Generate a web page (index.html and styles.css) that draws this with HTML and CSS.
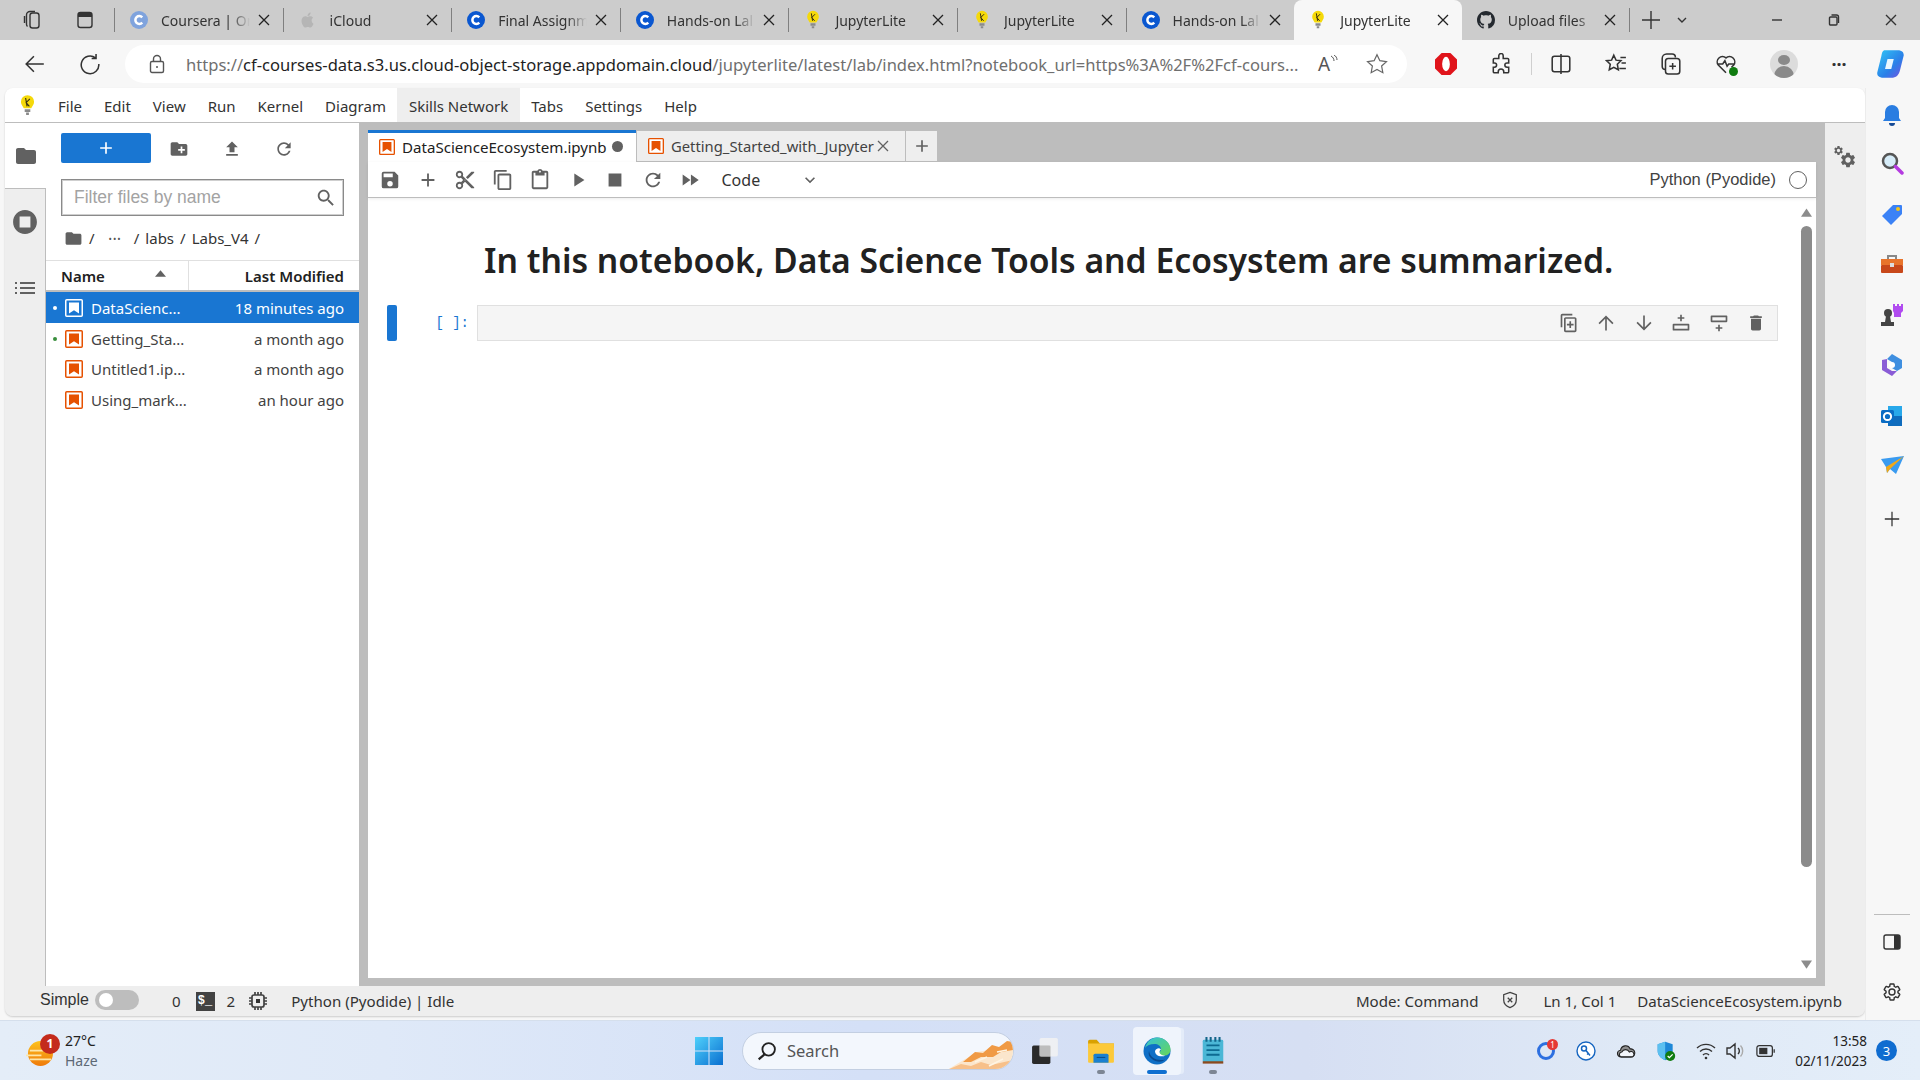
FILE: index.html
```html
<!DOCTYPE html>
<html lang="en">
<head>
<meta charset="utf-8">
<title>JupyterLite</title>
<link rel="stylesheet" href="styles.css">
</head>
<body>
<svg class="sprite" xmlns="http://www.w3.org/2000/svg">
  <symbol id="coursera" viewBox="0 0 20 20"><circle cx="10" cy="10" r="10" fill="currentColor"/><path d="M13.6 7a4.4 4.4 0 1 0 0 6" fill="none" stroke="#fff" stroke-width="2.8"/></symbol>
  <symbol id="bulb" viewBox="0 0 16 24"><path d="M8 1a7 7 0 0 1 7 7c0 3-2 4.600-3 7H4c-1-2.400-3-4-3-7a7 7 0 0 1 7-7z" fill="#f5d90a"/><path d="M5 16h6v3H5zM6.500 19.500h3V22h-3z" fill="#8a8a8a"/><path d="M6 4l1.500 9M10.500 5L6.500 9l3.500 4" fill="none" stroke="#3a3010" stroke-width="1.200"/></symbol>
  <symbol id="github" viewBox="0 0 16 16"><path fill="#24292f" d="M8 0C3.580 0 0 3.580 0 8c0 3.540 2.290 6.530 5.470 7.590.4.070.55-.17.55-.38 0-.19-.01-.82-.01-1.490-2.010.37-2.530-.49-2.690-.94-.09-.23-.48-.94-.82-1.130-.28-.15-.68-.52-.01-.53.63-.01 1.080.58 1.230.82.72 1.210 1.870.87 2.330.66.070-.52.28-.87.51-1.070-1.780-.2-3.640-.89-3.640-3.950 0-.87.31-1.590.82-2.150-.08-.2-.36-1.020.08-2.120 0 0 .67-.21 2.200.82.64-.18 1.320-.27 2-.27s1.360.09 2 .27c1.530-1.040 2.200-.82 2.200-.82.44 1.100.16 1.920.08 2.120.51.56.82 1.270.82 2.150 0 3.070-1.870 3.750-3.650 3.950.29.25.54.73.54 1.480 0 1.070-.01 1.930-.01 2.200 0 .21.15.46.55.38A8.010 8.010 0 0 0 16 8c0-4.420-3.580-8-8-8z"/></symbol>
  <symbol id="x" viewBox="0 0 12 12"><path d="M1 1l10 10M11 1L1 11" fill="none" stroke="currentColor" stroke-width="1.300"/></symbol>
  <symbol id="m-add" viewBox="0 0 24 24"><path d="M19 13h-6v6h-2v-6H5v-2h6V5h2v6h6v2z"/></symbol>
  <symbol id="m-save" viewBox="0 0 24 24"><path d="M17 3H5a2 2 0 0 0-2 2v14a2 2 0 0 0 2 2h14a2 2 0 0 0 2-2V7l-4-4zm-5 16a3 3 0 1 1 0-6 3 3 0 0 1 0 6zm3-10H5V5h10v4z"/></symbol>
  <symbol id="m-cut" viewBox="0 0 24 24"><path d="M9.640 7.640c.23-.5.36-1.050.36-1.640 0-2.210-1.790-4-4-4S2 3.790 2 6s1.790 4 4 4c.59 0 1.140-.13 1.640-.36L10 12l-2.360 2.360C7.140 14.130 6.590 14 6 14c-2.210 0-4 1.790-4 4s1.790 4 4 4 4-1.790 4-4c0-.59-.13-1.140-.36-1.640L12 14l7 7h3v-1L9.640 7.640zM6 8c-1.100 0-2-.89-2-2s.9-2 2-2 2 .89 2 2-.9 2-2 2zm0 12c-1.100 0-2-.89-2-2s.9-2 2-2 2 .89 2 2-.9 2-2 2zm6-7.500c-.28 0-.5-.22-.5-.5s.22-.5.5-.5.5.22.5.5-.22.5-.5.5zM19 3l-6 6 2 2 7-7V3z"/></symbol>
  <symbol id="m-copy" viewBox="0 0 24 24"><path d="M16 1H4c-1.100 0-2 .9-2 2v14h2V3h12V1zm3 4H8c-1.100 0-2 .9-2 2v14c0 1.100.9 2 2 2h11c1.100 0 2-.9 2-2V7c0-1.100-.9-2-2-2zm0 16H8V7h11v14z"/></symbol>
  <symbol id="m-paste" viewBox="0 0 24 24"><path d="M19 2h-4.180C14.400.84 13.300 0 12 0c-1.300 0-2.400.84-2.820 2H5c-1.100 0-2 .9-2 2v16c0 1.100.9 2 2 2h14c1.100 0 2-.9 2-2V4c0-1.100-.9-2-2-2zm-7 0c.55 0 1 .45 1 1s-.45 1-1 1-1-.45-1-1 .45-1 1-1zm7 18H5V4h2v3h10V4h2v16z"/></symbol>
  <symbol id="m-run" viewBox="0 0 24 24"><path d="M8 5v14l11-7z"/></symbol>
  <symbol id="m-stop" viewBox="0 0 24 24"><path d="M5 5h14v14H5z"/></symbol>
  <symbol id="m-refresh" viewBox="0 0 24 24"><path d="M17.650 6.350C16.200 4.900 14.210 4 12 4c-4.420 0-7.990 3.580-7.990 8s3.570 8 7.990 8c3.730 0 6.840-2.550 7.730-6h-2.080c-.82 2.330-3.040 4-5.650 4-3.310 0-6-2.690-6-6s2.690-6 6-6c1.660 0 3.140.69 4.220 1.780L13 11h7V4l-2.350 2.350z"/></symbol>
  <symbol id="m-ff" viewBox="0 0 24 24"><path d="M4 18l8.500-6L4 6v12zm9-12v12l8.500-6L13 6z"/></symbol>
  <symbol id="m-chev" viewBox="0 0 24 24"><path d="M16.590 8.590L12 13.170 7.410 8.590 6 10l6 6 6-6z"/></symbol>
  <symbol id="m-upload" viewBox="0 0 24 24"><path d="M9 16h6v-6h4l-7-7-7 7h4zm-4 2h14v2H5z"/></symbol>
  <symbol id="m-folder" viewBox="0 0 24 24"><path d="M10 4H4c-1.100 0-2 .9-2 2v12c0 1.100.9 2 2 2h16c1.100 0 2-.9 2-2V8c0-1.100-.9-2-2-2h-8l-2-2z"/></symbol>
  <symbol id="m-newfolder" viewBox="0 0 24 24"><path d="M20 6h-8l-2-2H4c-1.110 0-1.990.89-1.990 2L2 18c0 1.110.89 2 2 2h16c1.110 0 2-.89 2-2V8c0-1.110-.89-2-2-2zm-1 8h-3v3h-2v-3h-3v-2h3V9h2v3h3v2z"/></symbol>
  <symbol id="m-search" viewBox="0 0 24 24"><path d="M15.500 14h-.79l-.28-.27C15.410 12.590 16 11.110 16 9.500 16 5.910 13.090 3 9.500 3S3 5.910 3 9.500 5.910 16 9.500 16c1.610 0 3.090-.59 4.230-1.570l.27.28v.79l5 4.990L20.490 19l-4.990-5zm-6 0C7.010 14 5 11.990 5 9.500S7.010 5 9.500 5 14 7.010 14 9.500 11.990 14 9.500 14z"/></symbol>
  <symbol id="m-stopc" viewBox="0 0 24 24"><path d="M12 1C5.900 1 1 5.900 1 12s4.900 11 11 11 11-4.900 11-11S18.100 1 12 1zm5 16H7V7h10v10z"/></symbol>
  <symbol id="m-list" viewBox="0 0 24 24"><path d="M2 13h2v-2H2v2zm0 5h2v-2H2v2zM2 8h2V6H2v2zm5 5h15v-2H7v2zm0 5h15v-2H7v2zM7 6v2h15V6H7z"/></symbol>
  <symbol id="m-up" viewBox="0 0 24 24"><path d="M3 12l1.410 1.410L11 6.830V21h2V6.830l6.580 6.590L21 12l-9-9-9 9z"/></symbol>
  <symbol id="m-down" viewBox="0 0 24 24"><path d="M21 12l-1.410-1.410L13 17.170V3h-2v14.170l-6.580-6.590L3 12l9 9 9-9z"/></symbol>
  <symbol id="m-del" viewBox="0 0 24 24"><path d="M6 19c0 1.100.9 2 2 2h8c1.100 0 2-.9 2-2V7H6v12zM19 4h-3.500l-1-1h-5l-1 1H5v2h14V4z"/></symbol>
  <symbol id="m-dup" viewBox="0 0 24 24"><path d="M16 1H4c-1.100 0-2 .9-2 2v14h2V3h12V1zm3 4H8c-1.100 0-2 .9-2 2v14c0 1.100.9 2 2 2h11c1.100 0 2-.9 2-2V7c0-1.100-.9-2-2-2zm0 16H8V7h11v14zM12.500 13V10h2v3h3v2h-3v3h-2v-3h-3v-2z"/></symbol>
  <symbol id="m-above" viewBox="0 0 24 24"><path d="M11 2h2v3h3v2h-3v3h-2V7H8V5h3zM3 13h18a1 1 0 0 1 1 1v6a1 1 0 0 1-1 1H3a1 1 0 0 1-1-1v-6a1 1 0 0 1 1-1zm1 2v4h16v-4z"/></symbol>
  <symbol id="m-below" viewBox="0 0 24 24"><path d="M11 22h2v-3h3v-2h-3v-3h-2v3H8v2h3zM3 3h18a1 1 0 0 1 1 1v6a1 1 0 0 1-1 1H3a1 1 0 0 1-1-1V4a1 1 0 0 1 1-1zm1 2v4h16V5z"/></symbol>
  <symbol id="m-gear" viewBox="0 0 24 24"><path d="M19.140 12.940c.04-.3.06-.61.06-.94 0-.32-.02-.64-.07-.94l2.030-1.580a.49.49 0 0 0 .12-.61l-1.920-3.320a.488.488 0 0 0-.59-.22l-2.390.96c-.5-.38-1.030-.7-1.620-.94l-.36-2.540a.484.484 0 0 0-.48-.41h-3.840c-.24 0-.43.17-.47.41l-.36 2.540c-.59.24-1.130.57-1.620.94l-2.390-.96c-.22-.08-.47 0-.59.22L2.740 8.870c-.12.21-.08.47.12.61l2.030 1.580c-.05.3-.09.63-.09.94s.02.64.07.94l-2.030 1.580a.49.49 0 0 0-.12.61l1.920 3.320c.12.22.37.29.59.22l2.390-.96c.5.38 1.030.7 1.620.94l.36 2.540c.05.24.24.41.48.41h3.840c.24 0 .44-.17.47-.41l.36-2.540c.59-.24 1.130-.56 1.620-.94l2.390.96c.22.08.47 0 .59-.22l1.920-3.320c.12-.22.07-.47-.12-.61l-2.010-1.580zM12 15.600c-1.980 0-3.600-1.620-3.600-3.600s1.620-3.600 3.600-3.600 3.600 1.620 3.600 3.600-1.620 3.600-3.600 3.600z"/></symbol>
  <symbol id="nb" viewBox="0 0 18 18"><rect x=".75" y=".75" width="16.500" height="16.500" rx="1" fill="var(--nb-bg,#fff)" stroke="currentColor" stroke-width="1.500"/><path d="M4 3.500h10v11l-5-3.200-5 3.200z" fill="currentColor"/></symbol>
</svg>

<header class="tabstrip">
  <span class="strip-btn strip-first"><svg class="i20 line" viewBox="0 0 20 20"><rect x="8" y="3" width="9" height="15" rx="2.500"/><path d="M5.500 16.500a3 3 0 0 1-1-2.200V5a3.500 3.500 0 0 1 3.500-3.500h5M2.500 13V6"/></svg></span>
  <span class="strip-btn"><svg class="i20 line" viewBox="0 0 20 20"><rect x="3" y="2.500" width="14" height="15" rx="2.500"/><path class="solid" d="M3 5a2.500 2.500 0 0 1 2.500-2.500h9A2.500 2.500 0 0 1 17 5v2H3z"/></svg></span>
  <span class="sep sep-first"></span>
  <div class="tab"><svg class="fav dim"><use href="#coursera"/></svg><span class="tab-title">Coursera | On</span><svg class="tab-x"><use href="#x"/></svg></div>
  <span class="sep"></span>
  <div class="tab"><svg class="fav" viewBox="0 0 20 20"><path fill="#b5b5b5" d="M14 10.500c0-2 1.600-3 1.700-3-1-1.400-2.400-1.600-3-1.600-1.300-.1-2.500.8-3.100.8s-1.600-.8-2.700-.8C5.500 6 4.200 6.800 3.500 8c-1.500 2.500-.4 6.300 1 8.300.7 1 1.500 2.100 2.600 2.100 1 0 1.400-.7 2.700-.7s1.600.7 2.700.7 1.800-1 2.500-2c.8-1.100 1.100-2.200 1.100-2.300-.1 0-2.100-.8-2.100-3.600zM12 4.400c.6-.7 1-1.700.9-2.700-.8 0-1.900.6-2.500 1.300-.5.6-1 1.600-.9 2.600.9.100 1.900-.5 2.500-1.200z"/></svg><span class="tab-title">iCloud</span><svg class="tab-x"><use href="#x"/></svg></div>
  <span class="sep"></span>
  <div class="tab"><svg class="fav blue"><use href="#coursera"/></svg><span class="tab-title">Final Assignm</span><svg class="tab-x"><use href="#x"/></svg></div>
  <span class="sep"></span>
  <div class="tab"><svg class="fav blue"><use href="#coursera"/></svg><span class="tab-title">Hands-on Lal</span><svg class="tab-x"><use href="#x"/></svg></div>
  <span class="sep"></span>
  <div class="tab"><svg class="fav"><use href="#bulb"/></svg><span class="tab-title">JupyterLite</span><svg class="tab-x"><use href="#x"/></svg></div>
  <span class="sep"></span>
  <div class="tab"><svg class="fav"><use href="#bulb"/></svg><span class="tab-title">JupyterLite</span><svg class="tab-x"><use href="#x"/></svg></div>
  <span class="sep"></span>
  <div class="tab"><svg class="fav blue"><use href="#coursera"/></svg><span class="tab-title">Hands-on Lal</span><svg class="tab-x"><use href="#x"/></svg></div>
  <div class="tab tab-active"><svg class="fav"><use href="#bulb"/></svg><span class="tab-title">JupyterLite</span><svg class="tab-x"><use href="#x"/></svg></div>
  <div class="tab"><svg class="fav"><use href="#github"/></svg><span class="tab-title">Upload files</span><svg class="tab-x"><use href="#x"/></svg></div>
  <span class="sep"></span>
  <svg class="strip-plus line" viewBox="0 0 20 20"><path d="M10 1v18M1 10h18"/></svg>
  <svg class="strip-chev line" viewBox="0 0 10 10"><path d="M1 3l4 4 4-4"/></svg>
  <div class="winctl">
    <svg class="line win" viewBox="0 0 12 12"><path d="M1 6h10"/></svg>
    <svg class="line win" viewBox="0 0 12 12"><rect x="1.500" y="3" width="7.500" height="8" rx="1"/><path d="M3.500 1h5a2 2 0 0 1 2 2v6"/></svg>
    <svg class="line win" viewBox="0 0 12 12"><path d="M1 1l10 10M11 1L1 11"/></svg>
  </div>
</header>

<nav class="addrrow">
  <svg class="nav-back line" viewBox="0 0 20 20"><path d="M18 10H2M9 3l-7 7 7 7"/></svg>
  <svg class="nav-reload line" viewBox="0 0 20 20"><path d="M15 4.500A8 8 0 1 0 18 10M15.500 1v4h-4"/></svg>
  <div class="addrbar">
    <svg class="lock line" viewBox="0 0 16 20"><rect x="1.500" y="7.500" width="13" height="11" rx="1.500"/><path d="M4.500 7.500V5a3.500 3.500 0 0 1 7 0v2.500"/><circle class="solid" cx="8" cy="13" r="1"/></svg>
    <div class="url"><span class="url-dim">https://</span>cf-courses-data.s3.us.cloud-object-storage.appdomain.cloud<span class="url-dim">/jupyterlite/latest/lab/index.html?notebook_url=https%3A%2F%2Fcf-cours...</span></div>
    <span class="read-aloud">A<svg class="read-waves line" viewBox="0 0 8 10"><path d="M1 1c2 1 3 3 3 5M4 0c2 1 3 3 3 5"/></svg></span>
    <svg class="star line" viewBox="0 0 20 20"><path d="M10 1.500l2.600 5.500 6 .8-4.400 4.100 1.100 6-5.300-2.900-5.300 2.900 1.100-6L1.400 7.800l6-.8z"/></svg>
  </div>
  <div class="ext-icons">
    <svg class="ext ext-opera" viewBox="0 0 20 20"><path fill="#e0141b" d="M6 0h8l6 6v8l-6 6H6l-6-6V6z"/><ellipse cx="10" cy="10" rx="3.500" ry="6.500" fill="#fff"/></svg>
    <svg class="ext line" viewBox="0 0 20 20"><path d="M8 2.500a2 2 0 0 1 4 0V5h4a1 1 0 0 1 1 1v3h-1.500a2 2 0 0 0 0 4H17v4a1 1 0 0 1-1 1h-3.500v-1a2.500 2.500 0 0 0-5 0v1H4a1 1 0 0 1-1-1v-4h1a2 2 0 0 0 0-4H3V6a1 1 0 0 1 1-1h4z"/></svg>
    <span class="ext-sep"></span>
    <svg class="ext line" viewBox="0 0 20 20"><rect x="2" y="3" width="16" height="14" rx="2"/><path d="M10 1v18"/></svg>
    <svg class="ext line" viewBox="0 0 20 20"><path d="M8 2l2 4.500 4.500.5-3.300 3.200.9 5L8 13l-4.100 2.200.9-5L1.500 7 6 6.500zM14 4h5M15 9h4M13 14h6"/></svg>
    <svg class="ext line" viewBox="0 0 20 20"><rect x="5" y="5" width="13" height="14" rx="2.500"/><path d="M5 15a3 3 0 0 1-3-3V5a4 4 0 0 1 4-4h5a3 3 0 0 1 3 3M11.500 9v6M8.500 12h6"/></svg>
    <span class="ext-health"><svg class="ext line" viewBox="0 0 20 20"><path d="M10 18L3 11a4.800 4.800 0 0 1 7-6.500A4.800 4.800 0 0 1 17 11l-2 2M2 10h5l2-3 2 5 1.500-2H18"/></svg><span class="ok-badge"></span></span>
    <span class="avatar"><span class="avatar-head"></span><span class="avatar-body"></span></span>
    <span class="dots">···</span>
    <svg class="ext copilot" viewBox="0 0 24 24"><defs><linearGradient id="cg" x1="0" y1="0" x2="1" y2="1"><stop offset="0" stop-color="#2fc6f5"/><stop offset=".6" stop-color="#2b7fe8"/><stop offset="1" stop-color="#7a4fe0"/></linearGradient></defs><path fill="url(#cg)" d="M8 1h10c4 0 5 2 5 4l-3 12c-1 4-3 6-7 6H7c-4 0-6-2-5-5L5 6c.6-3 1-5 3-5z"/><path fill="#e9f7ff" d="M10 8h5l-2 8H8z"/></svg>
  </div>
</nav>

<div class="mainrow">
  <main class="app">
    <div class="menubar">
      <svg class="menu-logo"><use href="#bulb"/></svg>
      <span class="menu-item">File</span><span class="menu-item">Edit</span><span class="menu-item">View</span><span class="menu-item">Run</span><span class="menu-item">Kernel</span><span class="menu-item">Diagram</span><span class="menu-item menu-active">Skills Network</span><span class="menu-item">Tabs</span><span class="menu-item">Settings</span><span class="menu-item">Help</span>
    </div>

    <div class="workspace">
      <aside class="activity">
        <div class="act-tab act-on"><svg class="i24 g5"><use href="#m-folder"/></svg></div>
        <div class="act-tab"><svg class="i26 g5"><use href="#m-stopc"/></svg></div>
        <div class="act-tab"><svg class="i24 g5"><use href="#m-list"/></svg></div>
      </aside>

      <section class="files">
        <div class="files-tools">
          <button class="newbtn" type="button"><svg class="i20 white"><use href="#m-add"/></svg></button>
          <svg class="i20 g5 ft-icon"><use href="#m-newfolder"/></svg>
          <svg class="i20 g5 ft-icon"><use href="#m-upload"/></svg>
          <svg class="i20 g5 ft-icon"><use href="#m-refresh"/></svg>
        </div>
        <div class="filter"><span class="filter-ph">Filter files by name</span><svg class="i22 g5"><use href="#m-search"/></svg></div>
        <div class="crumbs"><svg class="crumb-folder g5"><use href="#m-folder"/></svg><span>/</span><span class="crumb-dots">•••</span><span>/</span><span>labs</span><span>/</span><span>Labs_V4</span><span>/</span></div>
        <div class="fhead">
          <div class="fh-name">Name<svg class="sort" viewBox="0 0 12 7"><path d="M6 0l6 7H0z"/></svg></div>
          <div class="fh-mod">Last Modified</div>
        </div>
        <div class="frow frow-sel"><span class="dot"></span><svg class="nbicon"><use href="#nb"/></svg><span class="fname">DataScienc...</span><span class="fdate">18 minutes ago</span></div>
        <div class="frow"><span class="dot dot-green"></span><svg class="nbicon"><use href="#nb"/></svg><span class="fname">Getting_Sta...</span><span class="fdate">a month ago</span></div>
        <div class="frow"><span class="dot dot-none"></span><svg class="nbicon"><use href="#nb"/></svg><span class="fname">Untitled1.ip...</span><span class="fdate">a month ago</span></div>
        <div class="frow"><span class="dot dot-none"></span><svg class="nbicon"><use href="#nb"/></svg><span class="fname">Using_mark...</span><span class="fdate">an hour ago</span></div>
      </section>

      <section class="dock">
        <div class="doc-tabs">
          <div class="dtab dtab-on"><svg class="nbicon"><use href="#nb"/></svg><span class="dtab-title">DataScienceEcosystem.ipynb</span><span class="dirty"></span></div>
          <div class="dtab dtab-second"><svg class="nbicon"><use href="#nb"/></svg><span class="dtab-title dtab-clip">Getting_Started_with_Jupyter</span><svg class="dtab-x"><use href="#x"/></svg></div>
          <div class="dtab dtab-add"><svg class="i20 g5"><use href="#m-add"/></svg></div>
        </div>
        <div class="nbpanel">
          <div class="nbtools">
            <svg class="i22 g5 nbt"><use href="#m-save"/></svg>
            <svg class="i22 g5 nbt"><use href="#m-add"/></svg>
            <svg class="i22 g5 nbt"><use href="#m-cut"/></svg>
            <svg class="i22 g5 nbt"><use href="#m-copy"/></svg>
            <svg class="i22 g5 nbt"><use href="#m-paste"/></svg>
            <svg class="i22 g5 nbt"><use href="#m-run"/></svg>
            <svg class="i22 g5 nbt"><use href="#m-stop"/></svg>
            <svg class="i22 g5 nbt"><use href="#m-refresh"/></svg>
            <svg class="i22 g5 nbt"><use href="#m-ff"/></svg>
            <span class="celltype">Code</span>
            <svg class="i20 g5 celltype-chev"><use href="#m-chev"/></svg>
            <span class="kernel">Python (Pyodide)</span>
            <span class="kernel-ring"></span>
          </div>
          <div class="nbbody">
            <div class="nbcontent">
              <h1 class="nbhead">In this notebook, Data Science Tools and Ecosystem are summarized.</h1>
              <div class="cell">
                <span class="collapser"></span>
                <span class="prompt">[ ]:</span>
                <div class="cellinput">
                  <svg class="i20 g5 cellbtn"><use href="#m-dup"/></svg>
                  <svg class="i20 g5 cellbtn"><use href="#m-up"/></svg>
                  <svg class="i20 g5 cellbtn"><use href="#m-down"/></svg>
                  <svg class="i20 g5 cellbtn"><use href="#m-above"/></svg>
                  <svg class="i20 g5 cellbtn"><use href="#m-below"/></svg>
                  <svg class="i20 g5 cellbtn"><use href="#m-del"/></svg>
                </div>
              </div>
            </div>
            <div class="scrollbar">
              <svg class="sb-arrow" viewBox="0 0 12 9"><path d="M6 0l6 9H0z"/></svg>
              <div class="sb-thumb"></div>
              <svg class="sb-arrow sb-down" viewBox="0 0 12 9"><path d="M0 0h12L6 9z"/></svg>
            </div>
          </div>
        </div>
      </section>

      <aside class="rightrail">
        <svg class="gears g5" viewBox="0 0 24 24"><use href="#m-gear" x="6" y="6" width="18" height="18"/><use href="#m-gear" x="0" y="0" width="11" height="11"/></svg>
      </aside>
    </div>

    <footer class="status">
      <span class="st-simple">Simple</span>
      <span class="toggle"><span class="knob"></span></span>
      <span class="st-zero">0</span>
      <span class="termicon">$_</span>
      <span class="st-two">2</span>
      <svg class="chip line" viewBox="0 0 20 20"><rect x="4" y="4" width="12" height="12" rx="2"/><rect class="solid" x="8" y="8" width="4" height="4"/><path d="M7 1v3M10 1v3M13 1v3M7 16v3M10 16v3M13 16v3M1 7h3M1 10h3M1 13h3M16 7h3M16 10h3M16 13h3"/></svg>
      <span class="st-kernel">Python (Pyodide) | Idle</span>
      <span class="st-mode">Mode: Command</span>
      <svg class="st-shield line" viewBox="0 0 20 20"><path d="M10 1.500l7 2.500v6c0 4-3 7-7 8.500C6 17 3 14 3 10V4zM7.500 7.500l5 5M12.500 7.500l-5 5"/></svg>
      <span class="st-ln">Ln 1, Col 1</span>
      <span class="st-file">DataScienceEcosystem.ipynb</span>
    </footer>
  </main>

  <aside class="edgebar">
    <svg class="eb eb-first" viewBox="0 0 24 24"><path fill="#2a7de1" d="M12 2a7 7 0 0 1 7 7v6l2 3H3l2-3V9a7 7 0 0 1 7-7z"/><path fill="#154a96" d="M9 20h6a3 3 0 0 1-6 0z"/></svg>
    <svg class="eb" viewBox="0 0 24 24"><circle cx="10" cy="10" r="7" fill="#d6ecf8" stroke="#555" stroke-width="2.500"/><path d="M15.500 15.500L22 22" stroke="#b43be0" stroke-width="3.500" stroke-linecap="round"/></svg>
    <svg class="eb" viewBox="0 0 24 24"><path fill="#3b82f6" d="M13 3h8a1 1 0 0 1 1 1v8L11 23 2 14z"/><circle cx="18" cy="7" r="2" fill="#f5c518"/></svg>
    <svg class="eb" viewBox="0 0 24 24"><path fill="none" stroke="#888" stroke-width="2" d="M8 7V4h8v3"/><rect x="1" y="7" width="22" height="6" fill="#e8742b"/><rect x="1" y="13" width="22" height="8" rx="1" fill="#c8481a"/><rect x="10" y="11" width="4" height="4" fill="#ddd"/></svg>
    <svg class="eb" viewBox="0 0 24 24"><path fill="#b14cf0" d="M13 1h2v2h2V1h2v2h2V1h2v7l-2 2v4h-7v-4l-1-2z"/><circle cx="8" cy="10" r="4" fill="#444"/><path fill="#444" d="M6 13h4l1 6h3v4H1v-4h4z"/></svg>
    <svg class="eb" viewBox="0 0 24 24"><path fill="#3f8fe0" d="M12 1l10 6v8l-5 3-5-3V9L7 6z"/><path fill="#8a5cd6" d="M2 7l5-1v9l5 3 5 0-5 5-10-6z"/><circle cx="12" cy="12" r="3" fill="#fff"/></svg>
    <svg class="eb" viewBox="0 0 24 24"><path fill="#28a8ea" d="M8 2h14v20H8z"/><path fill="#0f6cbd" d="M8 12l14 0v10H8z"/><rect x="1" y="6" width="13" height="13" rx="1.500" fill="#0a6cc4"/><circle cx="7.500" cy="12.500" r="3.600" fill="none" stroke="#fff" stroke-width="2"/></svg>
    <svg class="eb" viewBox="0 0 24 24"><path fill="#3a9bf0" d="M1 5l23-3-8 18-6-5-3 4-1-6z"/><path fill="#f0a818" d="M6 13l18-11-14 13-3 4z"/></svg>
    <svg class="eb eb-plus line" viewBox="0 0 20 20"><path d="M10 2v16M2 10h16"/></svg>
    <div class="eb-foot">
      <span class="eb-rule"></span>
      <svg class="eb-small line" viewBox="0 0 20 20"><rect x="2" y="3" width="16" height="14" rx="2"/><path class="solid" d="M12 3h4a2 2 0 0 1 2 2v10a2 2 0 0 1-2 2h-4z"/></svg>
      <svg class="eb-small eb-gear" viewBox="0 0 24 24"><use href="#m-gear" class="gear-stroke"/></svg>
    </div>
  </aside>
</div>

<footer class="taskbar">
  <div class="tb-left">
    <span class="weather"><svg class="sun" viewBox="0 0 28 28"><defs><linearGradient id="sg" x1="0" y1="0" x2="0" y2="1"><stop offset="0" stop-color="#fdc21e"/><stop offset="1" stop-color="#ef7a0a"/></linearGradient></defs><circle cx="15" cy="14" r="13" fill="url(#sg)"/><path d="M0 16h16M4 11h14M4 20h22" stroke="#fde6a8" stroke-width="1.800"/></svg><span class="wbadge">1</span></span>
    <div class="wtext"><span class="wtemp">27°C</span><span class="wdesc">Haze</span></div>
  </div>
  <div class="tb-center">
    <svg class="winlogo" viewBox="0 0 30 30"><defs><linearGradient id="wg" x1="0" y1="0" x2="1" y2="1"><stop offset="0" stop-color="#4fd0fb"/><stop offset="1" stop-color="#0a6fd0"/></linearGradient></defs><path fill="url(#wg)" d="M1 1h13.500v13.500H1zM15.500 1H29v13.500H15.500zM1 15.500h13.500V29H1zM15.500 15.500H29V29H15.500z"/></svg>
    <div class="tsearch">
      <svg class="ts-icon" viewBox="0 0 24 24"><circle cx="14" cy="10" r="7.500" fill="none" stroke="#222" stroke-width="2.200"/><path d="M9 16l-7 6" stroke="#222" stroke-width="2.600"/></svg>
      <span class="ts-text">Search</span>
      <svg class="ts-art" viewBox="0 0 70 38"><path fill="#fbe6cc" d="M4 38L34 20l36-6v24z"/><path fill="#f09a45" d="M20 30l12-10 8 1 9-8 7 2 8-6 6 1v8l-12 2-8 5-12 0-10 5z"/><path fill="#f7c08a" d="M4 38l14-6 10 2 10-4 10 3 22-5v10z"/><path d="M32 30l12-5M46 34l14-7M54 20l10-2" stroke="#fff4e2" stroke-width="1.500" fill="none"/></svg>
    </div>
    <span class="tb-app"><svg class="tb-ic" viewBox="0 0 26 26"><rect x="1" y="8" width="17" height="17" rx="1.500" fill="#2a2a2a"/><rect x="8" y="1" width="17" height="17" rx="1.500" fill="#f2f2f2" fill-opacity=".85"/><rect x="8" y="8" width="10" height="10" fill="#bdbdbd"/></svg></span>
    <span class="tb-app"><svg class="tb-ic" viewBox="0 0 26 26"><path fill="#d9a100" d="M1 4a1.500 1.500 0 0 1 1.500-1.500H9L12 6h13v4H1z"/><path fill="#fcc93a" d="M1 6h24v17a1 1 0 0 1-1 1H2a1 1 0 0 1-1-1z"/><path fill="#1a80d0" d="M6 17a1.500 1.500 0 0 1 1.500-1.500h11A1.500 1.500 0 0 1 20 17v7H6z"/><path d="M9 19h8" stroke="#0b4f8c" stroke-width="1"/></svg><span class="run-dot"></span></span>
    <span class="tb-app tb-app-on"><svg class="tb-ic" viewBox="0 0 28 28"><defs><linearGradient id="eg" x1="0" y1="0" x2="1" y2="1"><stop offset="0" stop-color="#35c1d8"/><stop offset="1" stop-color="#66d65a"/></linearGradient></defs><circle cx="14" cy="14" r="13.500" fill="#0f6fc6"/><path fill="url(#eg)" d="M2 11C4 4 9 .5 14 .5c8 0 13.500 6 13.500 12 0 4-3 6-6.500 6-3 0-5-1-5-2.500 0-1 2-1 2-4C18 9 15 7 11.500 7 7 7 4 8.500 2 11z"/><path fill="#0a4a8f" d="M9 22c-3-2-4-5-3-8 1 6 6 9 12 9 2 0 3 0 4-.5C18 26 13 25 9 22z"/><path fill="#fff" d="M12 14a3.500 3.500 0 0 1 6-1.500c-1 .3-1.500 1.500-1.500 2.500 0 2 2.500 3.500 5.500 3.500l-1 .7C15 20 12 17.500 12 14z"/></svg><span class="run-bar"></span></span>
    <span class="tb-app"><svg class="tb-ic" viewBox="0 0 26 30"><rect x="2" y="3" width="22" height="24" rx="1.500" fill="#4bb7d6"/><rect x="2" y="26" width="22" height="2.500" fill="#8b4a1e"/><path d="M6 9h14M6 14h14M6 19h14" stroke="#0d6a91" stroke-width="2"/><path d="M6 0v5M10.500 0v5M15.500 0v5M20 0v5" stroke="#13658a" stroke-width="2.200"/></svg><span class="run-dot"></span></span>
  </div>
  <div class="tb-right">
    <span class="tray"><span class="tray-ring"><span class="tray-note">1</span></span></span>
    <span class="tray"><svg class="tray-ic" viewBox="0 0 20 20"><circle cx="10" cy="10" r="9" fill="#fff" stroke="#1565c0" stroke-width="1.400"/><circle cx="8" cy="7.500" r="2.500" fill="none" stroke="#1565c0" stroke-width="1.500"/><path d="M10 9.500l4 5M12.500 12.500l-1.500 1" stroke="#1565c0" stroke-width="1.500"/></svg></span>
    <span class="tray"><svg class="tray-ic" viewBox="0 0 24 20"><path fill="#8d8d8d" stroke="#222" stroke-width="1.300" d="M6 17a4 4 0 0 1-.5-8A6 6 0 0 1 17 7.500 4.700 4.700 0 0 1 18.500 17z"/><path fill="#f2f5fa" stroke="#222" stroke-width="1.300" d="M6 17a3 3 0 0 1 1-5.800 5 5 0 0 1 9 0A3 3 0 0 1 20 17z"/></svg></span>
    <span class="tray tray-last"><svg class="tray-ic" viewBox="0 0 22 24"><path fill="#1e88d8" d="M10 1l9 3v8c0 5-4 9-9 11-5-2-9-6-9-11V4z"/><path fill="#5cc0f0" d="M10 1v22C5 21 1 17 1 12V4z"/><circle cx="16" cy="18" r="6" fill="#107c10"/><path d="M13 18l2 2 4-4" fill="none" stroke="#fff" stroke-width="1.500"/></svg></span>
    <span class="tray tray-sm"><svg class="tray-ic line" viewBox="0 0 20 20"><path d="M1 7a13 13 0 0 1 18 0M4 10.500a8.500 8.500 0 0 1 12 0M7 14a4 4 0 0 1 6 0"/><circle class="solid" cx="10" cy="17" r="1.300"/></svg></span>
    <span class="tray tray-sm"><svg class="tray-ic line" viewBox="0 0 20 20"><path d="M2 7h3l5-4v14l-5-4H2zM13 7a4 4 0 0 1 0 6"/><path class="faint" d="M15.500 4.500a8 8 0 0 1 0 11"/></svg></span>
    <span class="tray tray-sm tray-batt"><svg class="tray-ic line" viewBox="0 0 22 14"><rect x="1" y="1" width="17" height="12" rx="2.500"/><rect class="solid" x="3.500" y="3.500" width="9" height="7"/><path d="M20 5v4"/></svg></span>
    <div class="clock"><span>13:58</span><span>02/11/2023</span></div>
    <span class="notif">3</span>
  </div>
</footer>
</body>
</html>
```

FILE: styles.css
```css
* { box-sizing: border-box; }
html, body { margin: 0; height: 100%; }
body {
  width: 1920px; height: 1080px; overflow: hidden;
  display: flex; flex-direction: column;
  background: #f7f7f7; color: #212121;
  font-family: "Noto Sans", "Liberation Sans", sans-serif;
}
.sprite { width: 0; height: 0; display: block; position: absolute; }
svg { display: block; flex: none; }
.line { fill: none; stroke: #333; stroke-width: 1.400; }
.line .solid { fill: #333; stroke: none; }
.line .faint { stroke: #aaa; }
.i20 { width: 20px; height: 20px; }
.i22 { width: 22px; height: 22px; }
.i24 { width: 24px; height: 24px; }
.i26 { width: 26px; height: 26px; }
.g5 { fill: #616161; }
.white { fill: #fff; }

/* browser tabs */
.tabstrip { height: 40px; flex: none; display: flex; align-items: center; background: #cccccc; color: #333; }
.strip-btn { display: flex; justify-content: center; width: 53px; }
.strip-first { margin-left: 5px; }
.sep { width: 1px; height: 24px; background: #7f7f7f; flex: none; }
.sep-first { margin-left: 3px; }
.tab { width: 167.6px; height: 40px; flex: none; display: flex; align-items: center; padding: 0 13px 0 15px; font-size: 14px; }
.tab-active { background: #f7f7f7; border-radius: 8px 8px 0 0; }
.fav { width: 18px; height: 20px; margin-right: 13px; color: #1a5fd0; }
.fav.dim { color: #7fa3dd; }
.fav.blue { color: #0a57d0; }
.tab-title { flex: 1; min-width: 0; white-space: nowrap; -webkit-mask-image: linear-gradient(90deg, #000 78%, transparent 100%); mask-image: linear-gradient(90deg, #000 78%, transparent 100%); }
.tab-x { width: 12px; height: 12px; margin-left: 8px; color: #222; }
.strip-plus { width: 20px; height: 20px; margin-left: 11px; }
.strip-chev { width: 10px; height: 10px; margin-left: 16px; }
.winctl { margin-left: auto; display: flex; gap: 45px; padding-right: 23px; }
.win { width: 12px; height: 12px; }

/* address row */
.addrrow { height: 48px; flex: none; display: flex; align-items: center; padding-left: 24px; background: #f7f7f7; }
.nav-back { width: 22px; height: 22px; }
.nav-reload { width: 22px; height: 22px; margin-left: 33px; }
.addrbar { width: 1282px; height: 38px; margin-left: 24px; display: flex; align-items: center; padding: 0 20px 0 24px; background: #fff; border-radius: 19px; flex: none; }
.lock { width: 16px; height: 20px; stroke: #555; }
.lock .solid { fill: #555; }
.url { margin-left: 21px; font-size: 16.570px; color: #1f1f1f; white-space: nowrap; width: 1118px; flex: none; }
.url-dim { color: #6f6f6f; }
.read-aloud { display: flex; font-size: 19px; color: #555; margin-left: 14px; line-height: 1; }
.read-waves { width: 8px; height: 10px; stroke: #555; stroke-width: 1; }
.star { width: 22px; height: 22px; margin-left: 28px; stroke: #666; stroke-width: 1.100; }
.ext-icons { display: flex; align-items: center; margin-left: 28px; gap: 33px; }
.ext { width: 22px; height: 22px; }
.ext-sep { width: 1px; height: 22px; background: #cfcfcf; margin: 0 -14.500px; }
.ext-opera { height: 24px; }
.ext-health { display: flex; position: relative; }
.ok-badge { position: absolute; right: -1px; bottom: -1px; width: 9px; height: 9px; border-radius: 50%; background: #107c10; }
.avatar { width: 28px; height: 28px; border-radius: 50%; background: #dcdcdc; display: flex; flex-direction: column; align-items: center; overflow: hidden; padding-top: 5px; flex: none; }
.avatar-head { width: 12px; height: 12px; border-radius: 50%; background: #8a8a8a; }
.avatar-body { width: 20px; height: 14px; margin-top: 1px; border-radius: 10px 10px 0 0; background: #8a8a8a; }
.dots { font-size: 18px; font-weight: 700; color: #333; margin-left: -3px; width: 22px; text-align: center; }
.copilot { width: 30px; height: 30px; margin-left: -8px; }

/* app */
.mainrow { flex: 1; display: flex; min-height: 0; padding-left: 5px; }
.app { width: 1860px; height: 928px; display: flex; flex-direction: column; background: #eee; border-radius: 8px; overflow: hidden; box-shadow: 0 1px 2px rgba(0,0,0,.18); }
.menubar { height: 34px; flex: none; display: flex; align-items: stretch; background: #fff; padding-left: 15px; font-size: 15px; color: #333; }
.menu-logo { width: 15px; height: 23px; align-self: center; margin-right: 12px; }
.menu-item { display: flex; align-items: center; padding: 1px 11px 0; }
.menu-active { background: #eee; padding: 1px 12px 0; }

.workspace { flex: 1; min-height: 0; display: flex; background: #bdbdbd; border-top: 1px solid #bdbdbd; }
.activity { width: 41px; flex: none; background: #eee; border-right: 1px solid #bdbdbd; }
.act-tab { height: 66px; display: flex; align-items: center; justify-content: center; }
.act-on { background: #fff; margin-right: -1px; position: relative; border-bottom: 1px solid #bdbdbd; }
.files { width: 313px; flex: none; background: #fff; display: flex; flex-direction: column; margin-right: 8px; }
.files-tools { display: flex; align-items: center; padding: 10px 0 0 15px; }
.newbtn { width: 90px; height: 30px; border: 0; border-radius: 2px; background: #1976d2; display: flex; align-items: center; justify-content: center; padding: 0; }
.ft-icon { margin-left: 32.500px; margin-top: 1px; }
.newbtn + .ft-icon { margin-left: 18px; }
.filter { margin: 16px 15px 0 15px; height: 37px; border: 1px solid #8a8a8a; display: flex; align-items: center; justify-content: space-between; padding: 0 6px 0 12px; font-family: "Liberation Sans", sans-serif; font-size: 17.500px; box-shadow: inset 0 0 0 1px #cfcfcf; }
.filter-ph { color: #a3a3a3; }
.crumbs { height: 44px; display: flex; align-items: center; gap: 6px; padding-left: 18px; font-size: 15px; color: #333; flex: none; }
.crumb-folder { width: 19px; height: 19px; }
.crumb-dots { font-size: 9px; letter-spacing: 1px; margin: 0 6px 0 8px; color: #555; }
.fhead { height: 32px; flex: none; display: flex; align-items: stretch; border-top: 1px solid #e0e0e0; border-bottom: 2px solid #bdbdbd; font-size: 15px; font-weight: 600; }
.fh-name { width: 143px; display: flex; align-items: center; justify-content: space-between; padding: 0 22px 0 15px; border-right: 1px solid #e0e0e0; }
.sort { width: 11px; height: 7px; fill: #616161; margin-top: -4px; }
.fh-mod { flex: 1; display: flex; align-items: center; justify-content: flex-end; padding-right: 15px; }
.frow { height: 30.700px; flex: none; display: flex; align-items: center; font-size: 15px; color: #424242; padding: 1px 15px 0 0; }
.frow-sel { background: #1976d2; color: #fff; }
.dot { width: 4px; height: 4px; border-radius: 50%; background: #fff; margin-left: 7px; margin-right: 8px; flex: none; }
.dot-green { background: #388e3c; }
.dot-none { background: transparent; }
.nbicon { width: 18px; height: 18px; color: #e65100; }
.frow .nbicon { margin-right: 8px; }
.frow-sel .nbicon { color: #fff; --nb-bg: transparent; }
.fname { flex: 1; white-space: nowrap; }
.fdate { white-space: nowrap; }

.dock { width: 1458px; flex: none; display: flex; flex-direction: column; padding: 7px 9px 8px 1px; }
.doc-tabs { display: flex; height: 32px; flex: none; font-size: 15.100px; }
.dtab { display: flex; align-items: center; background: #eee; border: 1px solid #bdbdbd; border-top: 0; padding: 0 0 0 11px; color: #424242; margin-top: 1px; height: 31px; }
.dtab .nbicon { width: 16px; height: 16px; margin-right: 7px; }
.dtab-on { width: 268px; background: #fff; border: 0; border-top: 3px solid #1976d2; margin-top: 0; height: 32px; color: #212121; padding: 0 0 2px 11px; }
.dtab-second { width: 270px; }
.dtab-clip { font-size: 14.800px; white-space: nowrap; }
.dirty { width: 11px; height: 11px; margin-left: 5px; border-radius: 50%; background: #616161; }
.dtab-x { width: 12px; height: 12px; color: #616161; margin-left: auto; margin-right: 16px; }
.dtab-add { width: 32px; padding: 0; justify-content: center; border-left: 0; }
.nbpanel { flex: 1; min-height: 0; display: flex; flex-direction: column; background: #fff; }
.nbtools { height: 36px; flex: none; display: flex; align-items: center; padding: 0 2px 0 11px; border-bottom: 1px solid #bdbdbd; box-shadow: 0 1px 3px rgba(0,0,0,.08); }
.nbt { margin-right: 15.500px; }
.celltype { font-size: 16px; color: #333; margin-left: 5px; width: 78px; }
.kernel { margin-left: auto; font-family: "Liberation Sans", sans-serif; font-size: 16.500px; color: #424242; }
.kernel-ring { width: 18px; height: 18px; margin: 0 7px 0 13px; border-radius: 50%; border: 1.500px solid #616161; }
.nbbody { flex: 1; min-height: 0; display: flex; }
.nbcontent { flex: 1; min-width: 0; padding-top: 42px; }
.nbhead { margin: 0 0 25px; padding-left: 116px; height: 40px; line-height: 40px; font-size: 33.700px; font-weight: 600; color: #212121; white-space: nowrap; }
.cell { display: flex; align-items: center; padding: 0 19px; }
.collapser { width: 10px; height: 36px; border-radius: 2px; background: #1976d2; flex: none; }
.prompt { width: 72px; text-align: right; font-family: "Liberation Mono", monospace; font-size: 14px; color: #1976d2; white-space: pre; flex: none; }
.cellinput { flex: 1; height: 36px; margin-left: 8px; background: #f5f5f5; border: 1px solid #e0e0e0; display: flex; align-items: center; justify-content: flex-end; gap: 17.400px; padding-right: 11px; }
.scrollbar { width: 19px; flex: none; display: flex; flex-direction: column; align-items: center; padding: 10px 1px 9px 0; }
.sb-arrow { width: 11px; height: 9px; fill: #8c8c8c; }
.sb-thumb { width: 11px; height: 641px; margin-top: 9px; border-radius: 6px; background: #8b8b8b; }
.sb-down { margin-top: auto; }
.rightrail { width: 40px; flex: none; background: #eee; display: flex; justify-content: center; padding-top: 22px; }
.gears { width: 24px; height: 24px; }

.status { height: 30px; flex: none; display: flex; align-items: center; background: #eee; font-size: 15.100px; color: #333; }
.st-simple { margin-left: 35px; font-family: "Liberation Sans", sans-serif; font-size: 16px; margin-top: -2px; }
.toggle { width: 44px; height: 20px; margin-left: 6px; border-radius: 10px; background: #bdbdbd; padding: 3px 4px; flex: none; margin-top: -3px; }
.knob { display: block; width: 14px; height: 14px; border-radius: 50%; background: #fff; }
.st-zero { margin-left: 33px; }
.termicon { width: 19px; height: 19px; margin-left: 15px; background: #424242; color: #fff; font-family: "Liberation Mono", monospace; font-size: 12px; font-weight: 700; display: flex; align-items: center; justify-content: center; }
.st-two { margin-left: 12px; }
.chip { width: 20px; height: 20px; margin-left: 13px; stroke: #424242; stroke-width: 1.700; }
.st-kernel { margin-left: 23px; }
.st-mode { margin-left: auto; }
.st-shield { width: 18px; height: 18px; margin-left: 23px; margin-top: -3px; stroke: #424242; }
.st-ln { margin-left: 24px; }
.st-file { margin-left: 21px; margin-right: 23px; }

/* edge sidebar */
.edgebar { width: 55px; flex: none; display: flex; flex-direction: column; align-items: center; padding: 15px 2px 0 0; gap: 26.500px; background: #f7f7f7; border-left: 1px solid #ececec; }
.eb { width: 24px; height: 24px; }
.eb-first { margin-bottom: -2.500px; }
.eb-plus { width: 18px; height: 18px; margin-top: 5px; }
.eb-foot { margin-top: auto; display: flex; flex-direction: column; align-items: center; padding-bottom: 18px; }
.eb-rule { width: 36px; height: 1px; background: #bdbdbd; margin-bottom: 17px; }
.eb-small { width: 20px; height: 20px; }
.eb-gear { margin-top: 30px; }
.gear-stroke { fill: none; stroke: #333; stroke-width: 1.700; }

/* taskbar */
.taskbar { height: 60px; flex: none; display: flex; align-items: center; background: linear-gradient(90deg, #e4edf8 0%, #dfe9f8 20%, #d4e0f7 45%, #d6dff3 68%, #dfe9f6 85%, #e4eef9 100%); border-top: 1px solid #d5dfec; }
.tb-left { width: 694px; flex: none; display: flex; align-items: center; padding-left: 26px; }
.weather { width: 39px; height: 36px; display: flex; align-items: center; position: relative; flex: none; }
.sun { width: 27px; height: 27px; margin-top: 6px; }
.wbadge { position: absolute; left: 14px; top: 1px; width: 20px; height: 20px; border-radius: 50%; background: #c42b1c; color: #fff; font-size: 12px; font-weight: 700; display: flex; align-items: center; justify-content: center; }
.wtext { display: flex; flex-direction: column; font-size: 14px; line-height: 20px; }
.wdesc { color: #5d6875; }
.tb-center { display: flex; align-items: center; flex: none; }
.winlogo { width: 30px; height: 30px; }
.tsearch { width: 272px; height: 38px; margin-left: 18px; margin-right: 3px; display: flex; align-items: center; padding-left: 14px; border-radius: 19px; background: #f3f7fd; border: 1px solid #c3cfe2; overflow: hidden; position: relative; }
.ts-icon { width: 20px; height: 20px; }
.ts-text { margin-left: 10px; font-size: 16.500px; color: #555; }
.ts-art { width: 70px; height: 38px; margin-left: auto; }
.tb-app { width: 56px; height: 48px; display: flex; align-items: center; justify-content: center; position: relative; flex: none; }
.tb-app-on { width: 48px; margin: 0 4px; background: #eff4fc; border-radius: 4px; box-shadow: 4px 0 0 -1px #e4ecf9; }
.tb-ic { width: 28px; height: 28px; }
.run-dot { position: absolute; left: 50%; bottom: 1px; width: 8px; height: 4px; margin-left: -4px; border-radius: 2px; background: #7d8694; }
.run-bar { position: absolute; left: 50%; bottom: 1px; width: 20px; height: 4px; margin-left: -10px; border-radius: 2px; background: #0f6fd0; }
.tb-right { margin-left: auto; display: flex; align-items: center; padding-right: 23px; }
.tray { width: 40px; display: flex; justify-content: center; flex: none; }
.tray-last { margin-right: 5px; }
.tray-sm { width: 29.500px; }
.tray-batt { width: 32px; }
.tray-ic { width: 20px; height: 20px; }
.tray-ring { width: 18px; height: 18px; border-radius: 50%; border: 3px solid #2d6fe0; position: relative; }
.tray-note { position: absolute; right: -6px; top: -6px; width: 11px; height: 11px; border-radius: 50%; background: #e53935; color: #fff; font-size: 8px; line-height: 11px; text-align: center; }
.clock { width: 85px; display: flex; flex-direction: column; align-items: flex-end; font-size: 13.500px; line-height: 20px; color: #222; }
.notif { width: 21px; height: 21px; margin-left: 9px; border-radius: 50%; background: #0f6cd0; color: #fff; font-size: 13px; display: flex; align-items: center; justify-content: center; }
```
